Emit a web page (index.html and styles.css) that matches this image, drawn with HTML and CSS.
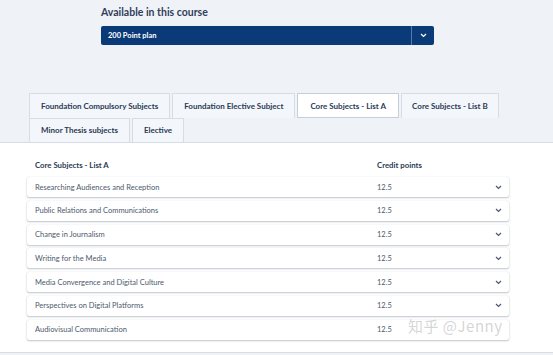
FILE: index.html
```html
<!DOCTYPE html>
<html>
<head>
<meta charset="utf-8">
<link rel="stylesheet" href="styles.css">
</head>
<body>
<div class="top">
  <div class="avail">Available in this course</div>
  <div class="select">
    <span class="select-label">200 Point plan</span>
    <span class="select-btn">
      <svg width="7" height="5" viewBox="0 0 7 5"><path d="M1 1l2.5 2.5L6 1" fill="none" stroke="#fff" stroke-width="1.2"/></svg>
    </span>
  </div>
</div>
<div class="tabs">
  <div class="tab">Foundation Compulsory Subjects</div>
  <div class="tab">Foundation Elective Subject</div>
  <div class="tab active">Core Subjects - List A</div>
  <div class="tab">Core Subjects - List B</div>
  <div class="tab">Minor Thesis subjects</div>
  <div class="tab">Elective</div>
</div>
<div class="panel">
  <div class="head">
    <span class="c1">Core Subjects - List A</span>
    <span class="c2">Credit points</span>
  </div>
  <div class="rows">
    <div class="row"><span class="c1">Researching Audiences and Reception</span><span class="c2">12.5</span><span class="chev"><svg width="7" height="5" viewBox="0 0 7 5"><path d="M1 1l2.5 2.5L6 1" fill="none" stroke="#4a5a72" stroke-width="1.2"/></svg></span></div>
    <div class="row"><span class="c1">Public Relations and Communications</span><span class="c2">12.5</span><span class="chev"><svg width="7" height="5" viewBox="0 0 7 5"><path d="M1 1l2.5 2.5L6 1" fill="none" stroke="#4a5a72" stroke-width="1.2"/></svg></span></div>
    <div class="row"><span class="c1">Change in Journalism</span><span class="c2">12.5</span><span class="chev"><svg width="7" height="5" viewBox="0 0 7 5"><path d="M1 1l2.5 2.5L6 1" fill="none" stroke="#4a5a72" stroke-width="1.2"/></svg></span></div>
    <div class="row"><span class="c1">Writing for the Media</span><span class="c2">12.5</span><span class="chev"><svg width="7" height="5" viewBox="0 0 7 5"><path d="M1 1l2.5 2.5L6 1" fill="none" stroke="#4a5a72" stroke-width="1.2"/></svg></span></div>
    <div class="row"><span class="c1">Media Convergence and Digital Culture</span><span class="c2">12.5</span><span class="chev"><svg width="7" height="5" viewBox="0 0 7 5"><path d="M1 1l2.5 2.5L6 1" fill="none" stroke="#4a5a72" stroke-width="1.2"/></svg></span></div>
    <div class="row"><span class="c1">Perspectives on Digital Platforms</span><span class="c2">12.5</span><span class="chev"><svg width="7" height="5" viewBox="0 0 7 5"><path d="M1 1l2.5 2.5L6 1" fill="none" stroke="#4a5a72" stroke-width="1.2"/></svg></span></div>
    <div class="row"><span class="c1">Audiovisual Communication</span><span class="c2">12.5</span><span class="chev"></span></div>
  </div>
  <div class="watermark">知乎 @Jenny</div>
</div>
</body>
</html>
```
FILE: styles.css
```css
html, body {
  margin: 0;
  padding: 0;
}
body {
  background: #eff3f8;
  font-family: "Lato", "Liberation Sans", sans-serif;
  color: #2b3a55;
  width: 553px;
  height: 355px;
  overflow: hidden;
}
.top {
  padding: 5px 0 0 101px;
}
.avail {
  font-weight: 700;
  font-size: 10.5px;
  color: #2f3e5a;
  height: 15px;
  line-height: 15px;
}
.select {
  margin-top: 6px;
  width: 333px;
  height: 19px;
  background: #0b3a78;
  border-radius: 2px;
  display: flex;
  align-items: center;
  color: #fff;
}
.select-label {
  flex: 1;
  font-size: 7.5px;
  font-weight: 700;
  padding-left: 7px;
}
.select-btn {
  width: 22px;
  height: 19px;
  border-left: 1px solid #5a7aa6;
  display: flex;
  align-items: center;
  justify-content: center;
}
.tabs {
  margin-top: 48px;
  padding-left: 29px;
  width: 480px;
  display: flex;
  flex-wrap: wrap;
  column-gap: 2px;
}
.tab {
  height: 24px;
  line-height: 24px;
  padding: 0 11px;
  font-size: 8px;
  font-weight: 700;
  color: #2b3a55;
  background: #f3f6fa;
  border: 1px solid #d6dde6;
  border-bottom: none;
}
.tab:nth-child(4) {
  padding: 0 10px;
}
.tab.active {
  background: #fff;
  border-color: #c5cfdb;
  border-bottom: 1px solid #c5cfdb;
  height: 23px;
  padding: 0 12px;
}
.tab:nth-child(5) {
  height: 23px;
  line-height: 23px;
}
.tab:nth-child(6) {
  height: 23px;
  line-height: 23px;
}
.panel {
  position: relative;
  background: #fff;
  border-top: 1px solid #d6dde6;
  border-bottom: 1px solid #d6dde6;
  padding: 16px 0 12px 27px;
  height: 181px;
}
.head {
  display: flex;
  font-size: 7.8px;
  font-weight: 700;
  color: #2b3a55;
  height: 12px;
  line-height: 12px;
  padding-left: 8px;
}
.c1 {
  width: 342px;
}
.c2 {
  flex: 1;
}
.rows {
  margin-top: 6px;
  width: 482px;
  display: flex;
  flex-direction: column;
  gap: 3.8px;
}
.row {
  height: 20px;
  display: flex;
  align-items: center;
  padding-left: 8px;
  background: #fff;
  border-radius: 2px;
  box-shadow: 0 1px 2px rgba(40, 55, 80, 0.28), 0 0 1px rgba(40, 55, 80, 0.2);
  font-size: 7.5px;
  color: #4d5a6c;
}
.chev {
  width: 14px;
  display: flex;
  align-items: center;
}
.watermark {
  position: absolute;
  left: 408px;
  top: 172px;
  font-family: "Noto Sans CJK SC", sans-serif;
  font-size: 15px;
  color: rgba(160, 160, 160, 0.45);
  letter-spacing: 0.5px;
}
```
